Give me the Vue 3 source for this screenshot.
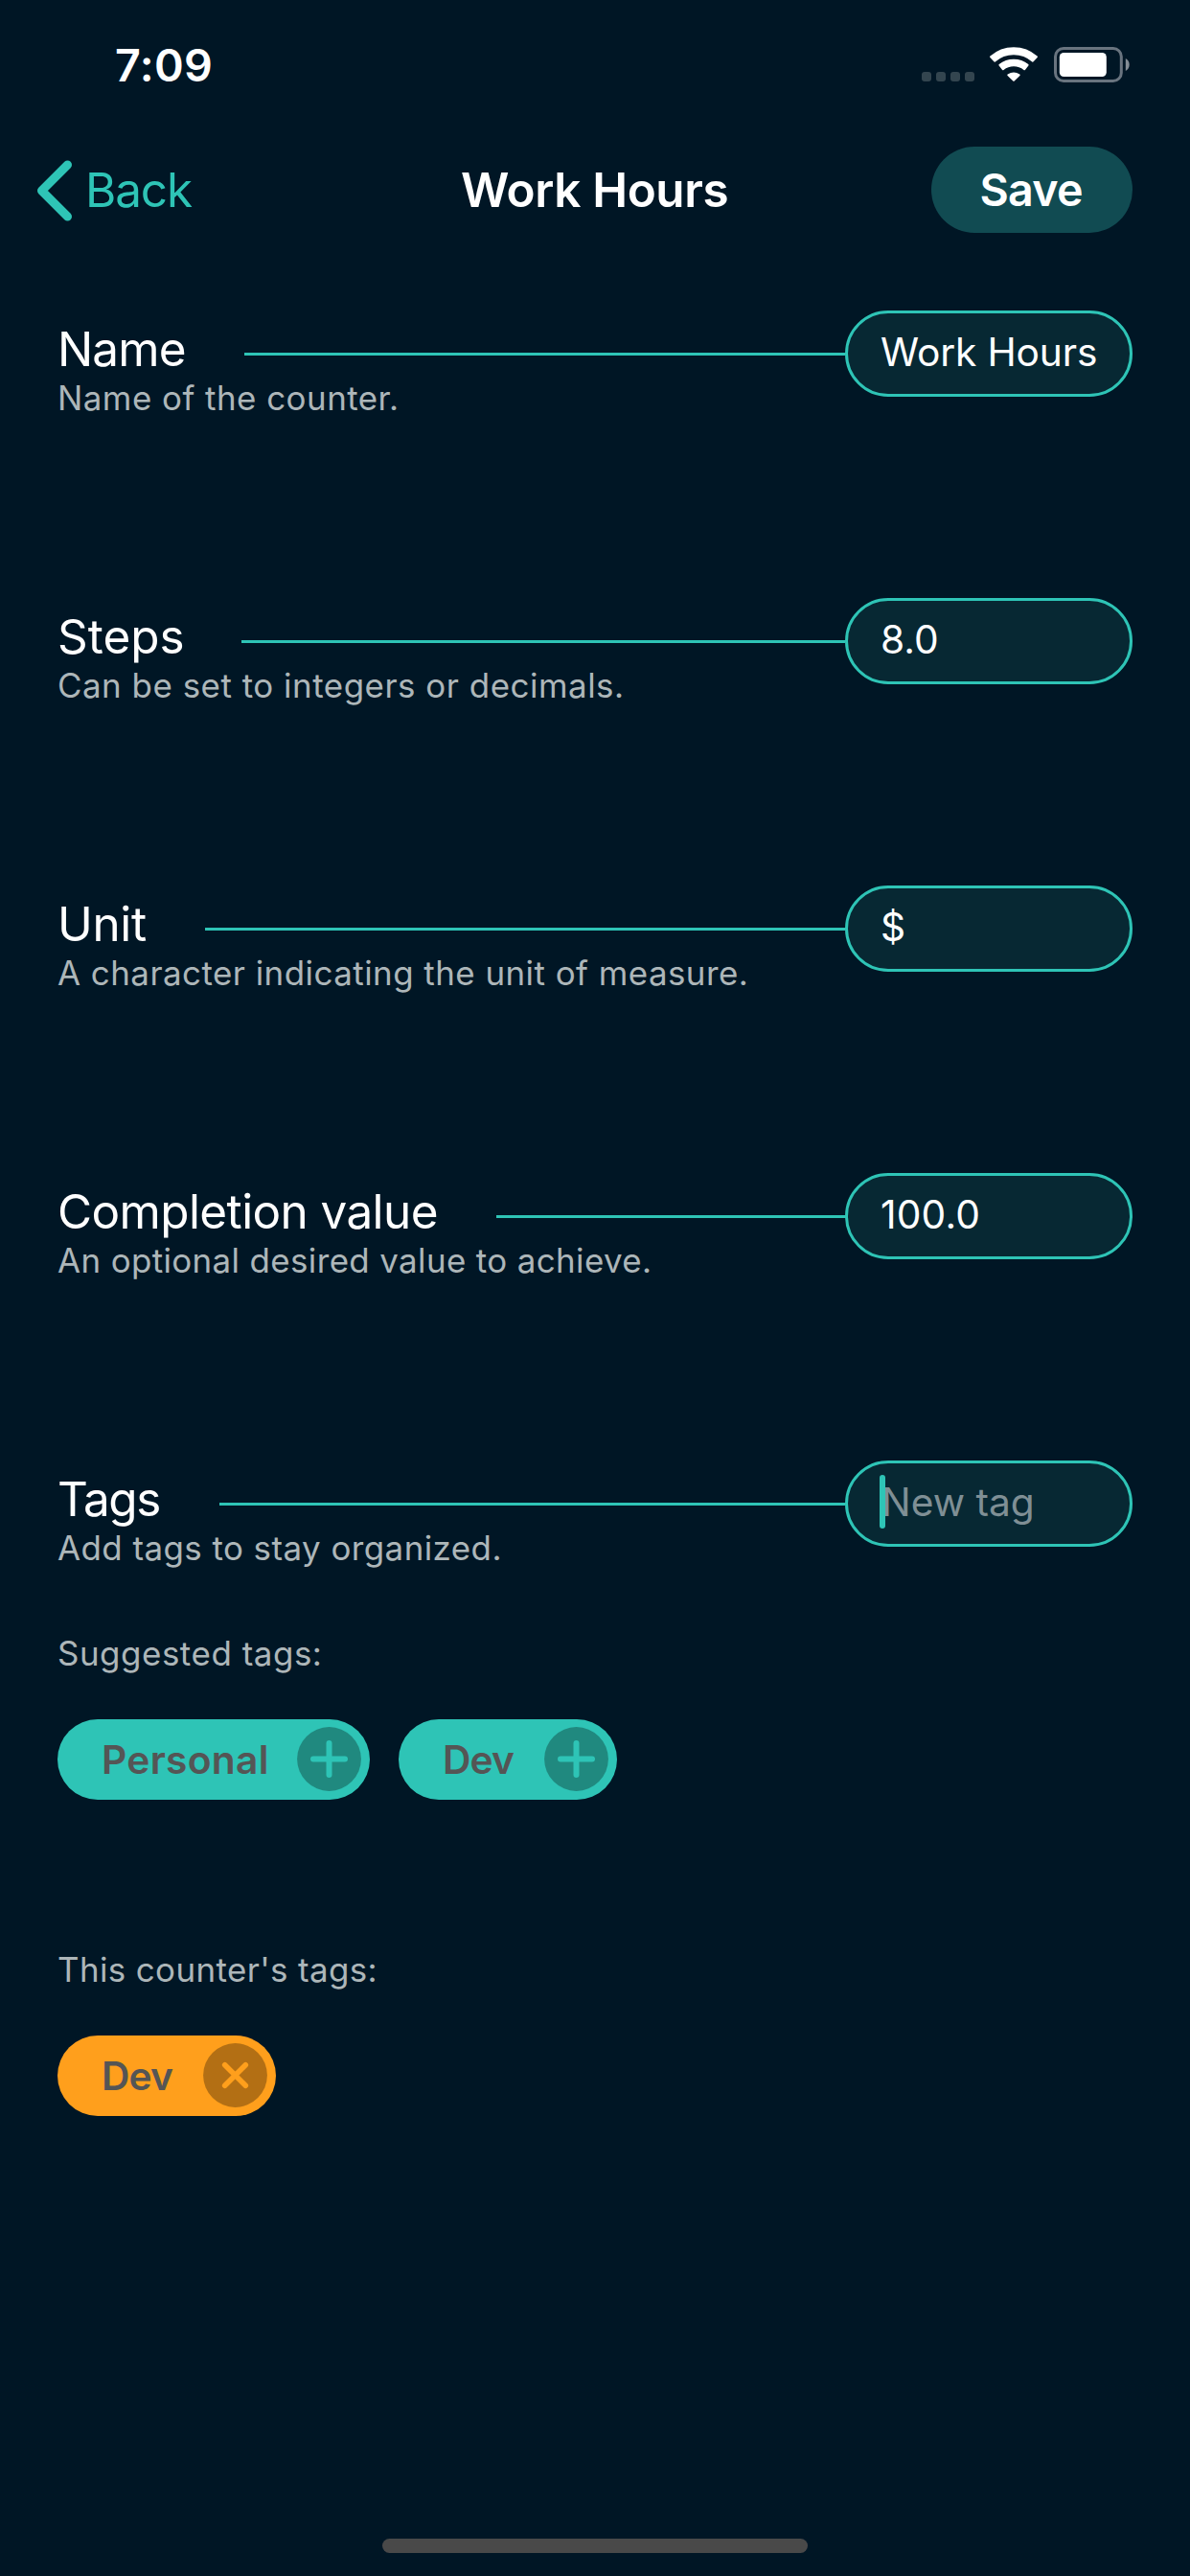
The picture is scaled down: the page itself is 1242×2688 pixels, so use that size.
<script setup>
const fields = [
  { label: 'Name', hint: 'Name of the counter.', value: 'Work Hours', width: 195, ls: -0.84, hintLs: 0.48, valueLs: -0.13 },
  { label: 'Steps', hint: 'Can be set to integers or decimals.', value: '8.0', width: 192, ls: 0.05, hintLs: 0.52, valueLs: 0.03 },
  { label: 'Unit', hint: 'A character indicating the unit of measure.', value: '$', width: 154, ls: -0.33, hintLs: 0.47, valueLs: 0 },
  { label: 'Completion value', hint: 'An optional desired value to achieve.', value: '100.0', width: 458, ls: -0.57, hintLs: 0.38, valueLs: 0.19 },
  { label: 'Tags', hint: 'Add tags to stay organized.', placeholder: 'New tag', width: 169, ls: -1.36, hintLs: 0.45, valueLs: 0 },
]
const suggested = [
  { name: 'Personal', width: 326, ls: 0.31 },
  { name: 'Dev', width: 228, ls: -0.85 },
]
const counterTags = [{ name: 'Dev', width: 228, ls: -0.85 }]
</script>

<template>
  <div class="screen">
    <header class="status">
      <span class="time">7:09</span>
      <div class="status-icons">
        <div class="dots"><i v-for="n in 4" :key="n"></i></div>
        <svg class="wifi" width="50" height="37" viewBox="-25 -36 50 37">
          <g fill="#fff" stroke="#fff" stroke-width="2" stroke-linejoin="round">
            <path d="M-23.9-25.75A36 36 0 0 1 23.9-25.75L19.9-21.3A30 30 0 0 0-19.9-21.3Z" />
            <path d="M-14.6-17.1A23.3 23.3 0 0 1 14.6-17.1L11.1-12.75A17.7 17.7 0 0 0-11.1-12.75Z" />
            <path d="M-5.7-6.7A10.3 10.3 0 0 1 5.7-6.7L0-1.2Z" />
          </g>
        </svg>
        <svg class="battery" width="80" height="37" viewBox="0 0 80 37">
          <rect x="1.5" y="1.5" width="68.8" height="34" rx="8.5" fill="none" stroke="#69747f" stroke-width="3" />
          <rect x="5.8" y="6" width="49" height="25" rx="4.5" fill="#fff" />
          <path d="M74.8 12C80 14.6 80 22.4 74.8 25Z" fill="#858e96" />
        </svg>
      </div>
    </header>

    <nav class="nav">
      <div class="nav-side">
        <a class="back">
          <svg width="38" height="64" viewBox="0 0 38 64">
            <path d="M32.5 5L5.5 32L32.5 59" fill="none" stroke="#2ec4b6" stroke-width="9" stroke-linecap="round" stroke-linejoin="round" />
          </svg>
          <span>Back</span>
        </a>
      </div>
      <h1>Work Hours</h1>
      <div class="nav-side end"><button class="save">Save</button></div>
    </nav>

    <main>
      <section class="fields">
        <div v-for="f in fields" :key="f.label" class="field">
          <div class="row">
            <label :style="{ width: f.width + 'px', letterSpacing: f.ls + 'px' }">{{ f.label }}</label>
            <div class="line"></div>
            <div class="input" :class="{ empty: f.placeholder }">
              <span :style="{ letterSpacing: f.valueLs + 'px' }">{{ f.value || f.placeholder }}</span>
              <i v-if="f.placeholder" class="caret"></i>
            </div>
          </div>
          <p class="hint" :style="{ letterSpacing: f.hintLs + 'px' }">{{ f.hint }}</p>
        </div>
      </section>

      <section class="tags first">
        <p class="hint wide">Suggested tags:</p>
        <div class="chips">
          <div v-for="t in suggested" :key="t.name" class="chip teal" :style="{ width: t.width + 'px' }">
            <span :style="{ letterSpacing: t.ls + 'px' }">{{ t.name }}</span>
            <svg width="67" height="67" viewBox="0 0 67 67">
              <circle cx="33.5" cy="33.5" r="33.4" fill="#20897f" />
              <path d="M33.5 17V50M17 33.5H50" stroke="#2ec4b6" stroke-width="6" stroke-linecap="round" />
            </svg>
          </div>
        </div>
      </section>

      <section class="tags second">
        <p class="hint">This counter's tags:</p>
        <div class="chips">
          <div v-for="t in counterTags" :key="t.name" class="chip orange" :style="{ width: t.width + 'px' }">
            <span :style="{ letterSpacing: t.ls + 'px' }">{{ t.name }}</span>
            <svg width="67" height="67" viewBox="0 0 67 67">
              <circle cx="33.5" cy="33.5" r="33.4" fill="#b36f14" />
              <path d="M22.7 22.7L44.3 44.3M44.3 22.7L22.7 44.3" stroke="#ff9f1c" stroke-width="5.6" stroke-linecap="round" />
            </svg>
          </div>
        </div>
      </section>
    </main>

    <footer><div class="home"></div></footer>
  </div>
</template>

<style>
body { background: #001625; }
</style>

<style scoped>
.screen {
  width: 1242px;
  height: 2688px;
  display: flex;
  flex-direction: column;
  background: #001625;
  color: #fff;
  font-family: Inter, "Liberation Sans", sans-serif;
  overflow: hidden;
}
.status {
  height: 153px;
  flex: none;
  box-sizing: border-box;
  padding: 38px 62px 0 120px;
  display: flex;
  justify-content: space-between;
  align-items: flex-start;
}
.time { font-size: 46.6px; font-weight: 600; line-height: 60px; letter-spacing: 0.38px; }
.status-icons { display: flex; align-items: flex-end; margin-top: 11px; height: 37px; }
.dots { display: flex; gap: 5px; margin: 0 16px 1px 0; }
.dots i { width: 10px; height: 10px; border-radius: 3px; background: #33454f; }
.wifi { margin-right: 17px; }
.wifi, .battery { display: block; }

.nav {
  height: 90px;
  flex: none;
  display: flex;
  align-items: center;
  padding: 0 60px 0 38px;
}
.nav-side { width: 443px; display: flex; }
.nav-side.end { flex: 1; justify-content: flex-end; }
.back {
  display: flex;
  align-items: center;
  gap: 13px;
  color: #2ec4b6;
  font-size: 49.4px;
  line-height: 60px;
  letter-spacing: -1.09px;
}
.back svg { display: block; margin-top: 1px; }
.nav h1 { margin: 0; font-size: 49.4px; line-height: 60px; font-weight: 600; letter-spacing: -0.35px; white-space: nowrap; }
.save {
  width: 210px;
  height: 90px;
  border: 0;
  border-radius: 45px;
  padding: 15px 0 15px 50.5px;
  box-sizing: border-box;
  background: #114b52;
  color: #fff;
  font: 600 46.6px/60px Inter, "Liberation Sans", sans-serif;
  letter-spacing: -0.76px;
  text-align: left;
}

main { flex: 1; padding: 81px 60px 0; }
.fields { display: flex; flex-direction: column; gap: 187px; }
.field { height: 113px; }
.row { display: flex; height: 90px; }
.row label { flex: none; margin-top: 10px; font-size: 49.4px; line-height: 60px; white-space: nowrap; }
.line { flex: 1; height: 3px; margin-top: 44px; background: #2ec4b6; }
.input {
  position: relative;
  flex: none;
  width: 300px;
  height: 90px;
  box-sizing: border-box;
  border: 3px solid #2ec4b6;
  border-radius: 45px;
  padding: 16px 0 0 34px;
  background: #072833;
  font-size: 40.7px;
  line-height: 49px;
  white-space: nowrap;
}
.input span { display: block; }
.input.empty { padding-left: 35px; color: #7f8f95; }
.caret {
  position: absolute;
  left: 33px;
  top: 12px;
  width: 6px;
  height: 56px;
  border-radius: 3px;
  background: #2ec4b6;
}
.hint { margin: 0; font-size: 34.9px; line-height: 44px; letter-spacing: 0.39px; color: #adb6b9; white-space: nowrap; }
.hint.wide { letter-spacing: 0.55px; }
.field .hint { margin-top: -21px; }

.tags.first { margin-top: 66px; }
.tags.second { margin-top: 155px; }
.chips { display: flex; gap: 30px; margin-top: 47px; }
.chip {
  height: 84px;
  box-sizing: border-box;
  border-radius: 42px;
  padding: 8px 9px 0 46px;
  display: flex;
  align-items: flex-start;
  justify-content: space-between;
  color: #555;
  font-size: 40.7px;
  font-weight: 600;
}
.chip span { margin-top: 10px; line-height: 49px; }
.chip svg { display: block; flex: none; }
.teal { background: #2ec4b6; }
.orange { background: #ff9f1c; }

footer { flex: none; height: 39px; display: flex; justify-content: center; }
.home { width: 444px; height: 15px; border-radius: 8px; background: #494949; }
</style>
